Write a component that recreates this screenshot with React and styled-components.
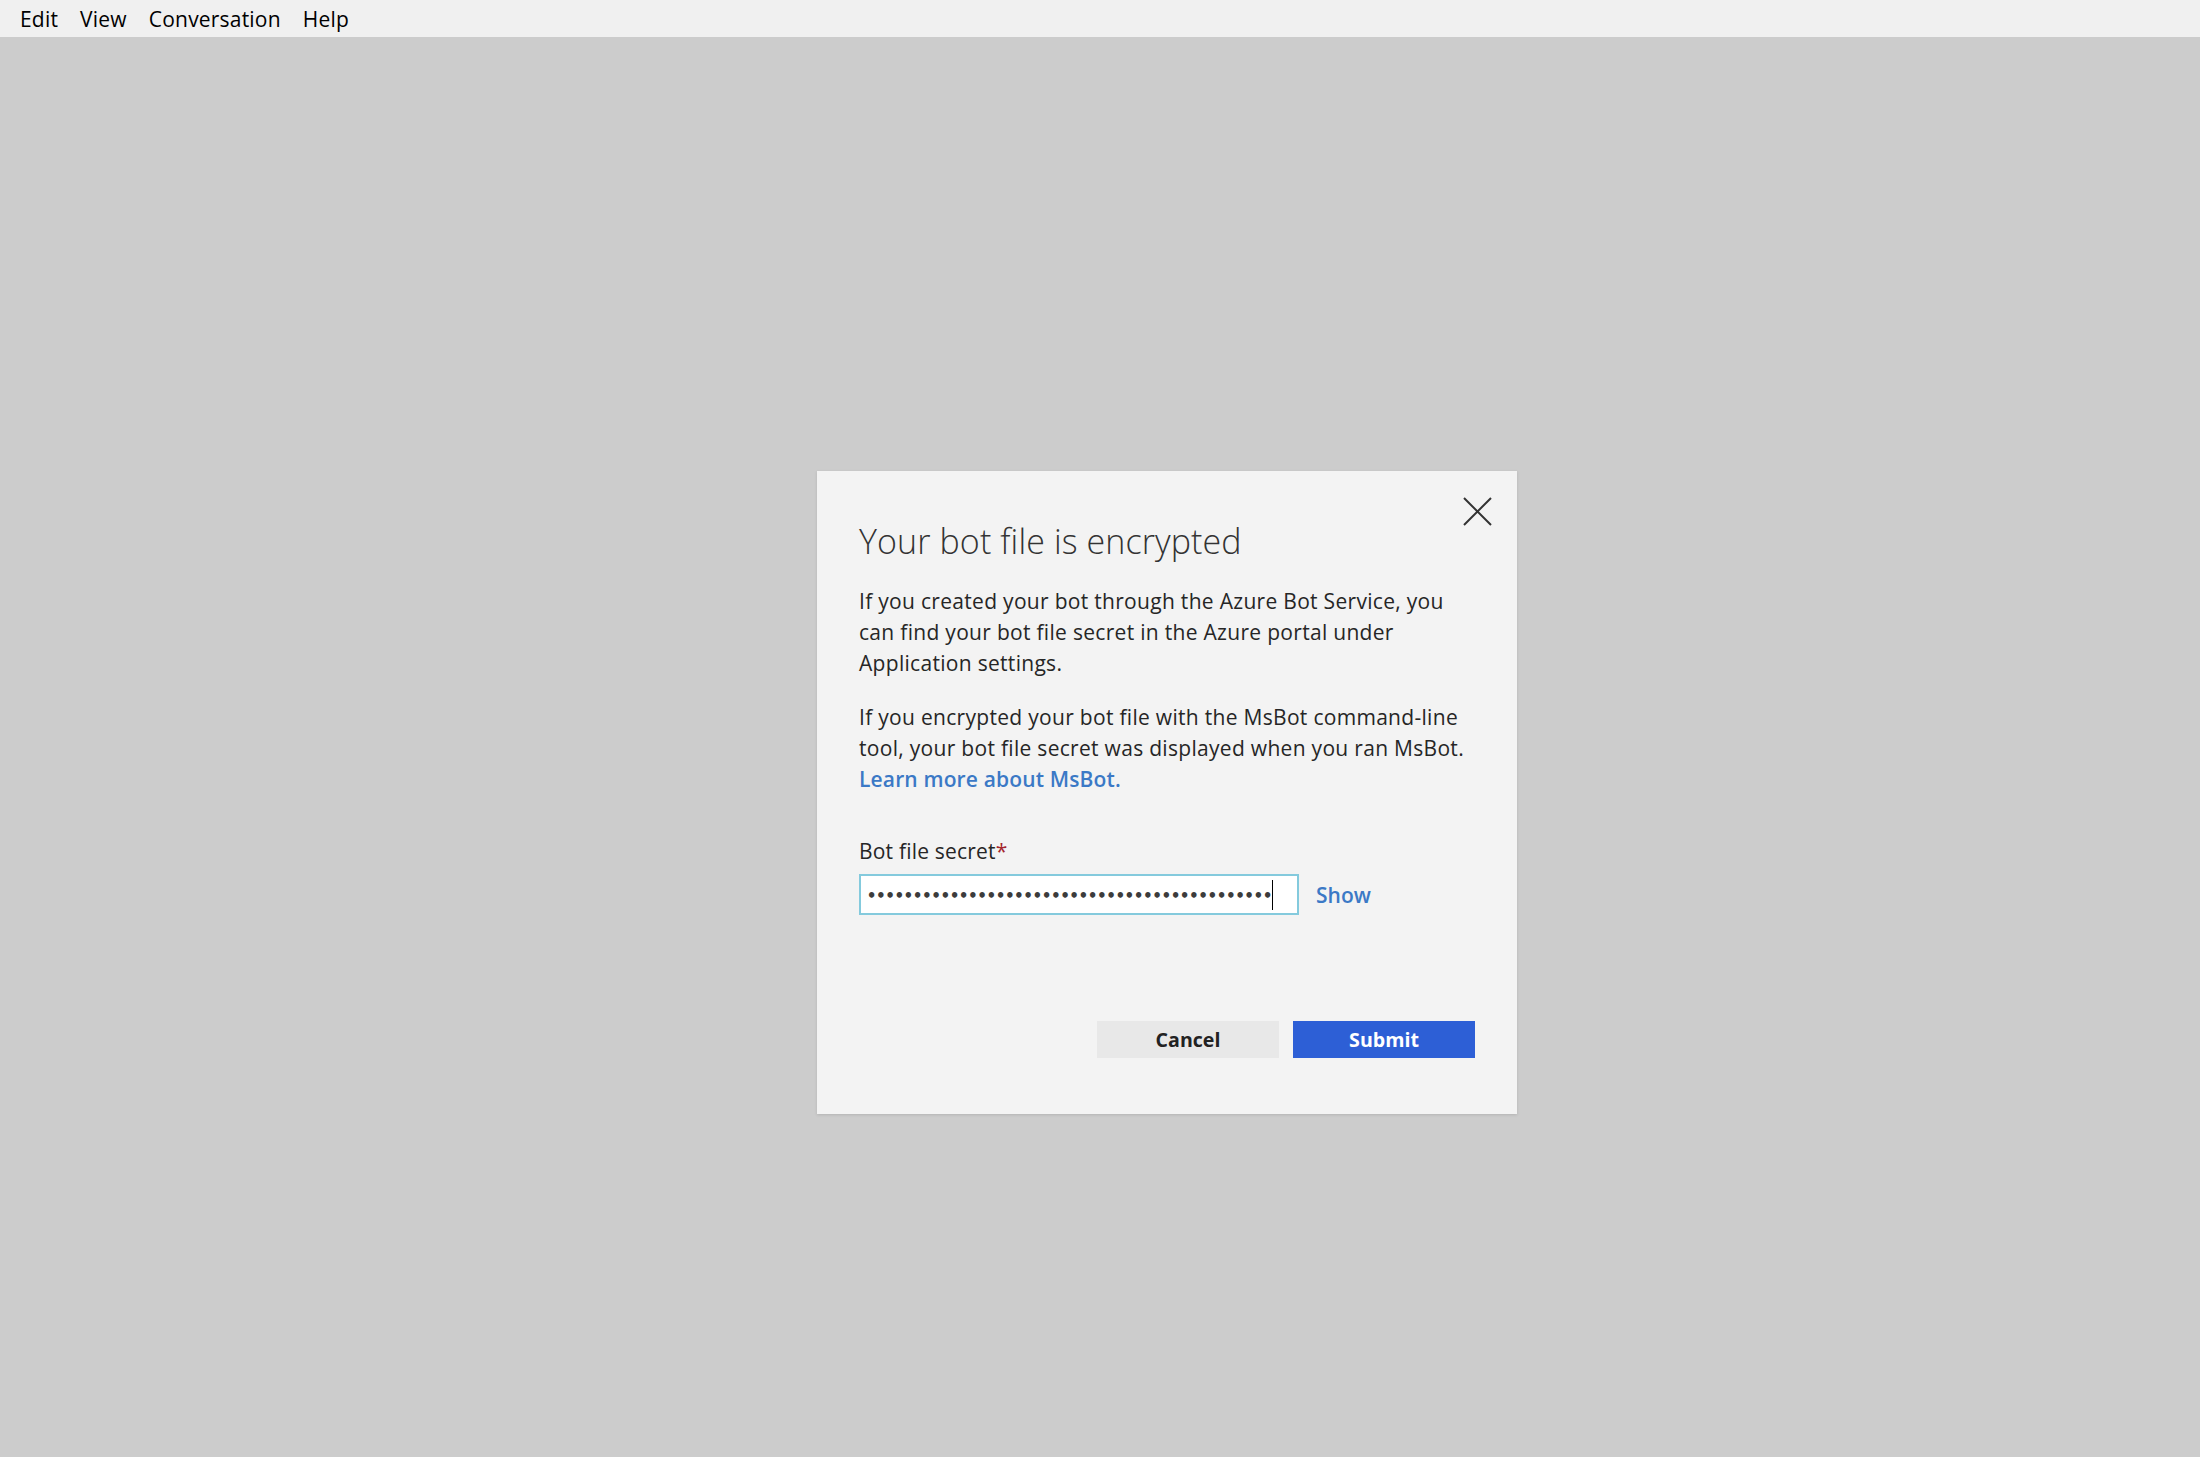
import React from "react";
import styled, { createGlobalStyle } from "styled-components";

const GlobalStyle = createGlobalStyle`
  html, body {
    margin: 0;
    padding: 0;
  }
  body {
    background: #cccccc;
    font-family: "Segoe UI", "Open Sans", "Noto Sans", sans-serif;
  }
  #root {
    min-height: 100vh;
    display: flex;
    flex-direction: column;
  }
`;

const menuItems = ["Edit", "View", "Conversation", "Help"];

function App() {
  const secret = "•".repeat(44);

  return (
    <>
      <GlobalStyle />
      <MenuBar>
        {menuItems.map((item) => (
          <MenuItem key={item}>{item}</MenuItem>
        ))}
      </MenuBar>
      <Backdrop>
        <Dialog>
          <CloseButton aria-label="Close">
            <svg width="29" height="29" viewBox="0 0 29 29">
              <path d="M1 1 L28 28 M28 1 L1 28" stroke="#333" strokeWidth="2" fill="none" />
            </svg>
          </CloseButton>
          <Title>Your bot file is encrypted</Title>
          <Paragraph>
            If you created your bot through the Azure Bot Service, you
            <br />
            can find your bot file secret in the Azure portal under
            <br />
            Application settings.
          </Paragraph>
          <Paragraph spaced>
            If you encrypted your bot file with the MsBot command-line
            <br />
            tool, your bot file secret was displayed when you ran MsBot.
            <br />
            <Link href="#">Learn more about MsBot.</Link>
          </Paragraph>
          <Label>
            Bot file secret<Required>*</Required>
          </Label>
          <FieldRow>
            <SecretBox>
              <Dots>{secret}</Dots>
              <Caret />
            </SecretBox>
            <ShowLink href="#">Show</ShowLink>
          </FieldRow>
          <ButtonRow>
            <Button>Cancel</Button>
            <Button primary>Submit</Button>
          </ButtonRow>
        </Dialog>
      </Backdrop>
    </>
  );
}

export default App;

const MenuBar = styled.nav`
  display: flex;
  align-items: center;
  height: 37px;
  padding-left: 9px;
  background: #f0f0f0;
`;

const MenuItem = styled.span`
  padding: 0 11px;
  font-size: 21px;
  letter-spacing: 0.2px;
  color: #000;
`;

const Backdrop = styled.main`
  flex: 1;
  display: flex;
  align-items: flex-start;
  padding: 434px 0 0 817px;
`;

const Dialog = styled.section`
  position: relative;
  box-sizing: border-box;
  width: 700px;
  height: 643px;
  padding: 50px 42px 56px;
  display: flex;
  flex-direction: column;
  background: #f3f3f3;
  box-shadow: 0 1px 3px rgba(0, 0, 0, 0.12);
  color: #262626;
`;

const CloseButton = styled.button`
  position: absolute;
  top: 26px;
  right: 25px;
  width: 29px;
  height: 29px;
  padding: 0;
  border: none;
  background: none;
  cursor: pointer;

  svg {
    display: block;
  }
`;

const Title = styled.h1`
  margin: 0 0 25px;
  font-size: 34px;
  font-weight: 300;
  letter-spacing: 0.1px;
  line-height: 40px;
  color: #333;
`;

const Paragraph = styled.p`
  margin: ${(p) => (p.spaced ? "23px" : "0")} 0 0;
  font-size: 21px;
  letter-spacing: 0.3px;
  line-height: 31px;
`;

const Link = styled.a`
  color: #3b79c6;
  font-weight: 600;
  letter-spacing: 0.15px;
  text-decoration: none;
`;

const Label = styled.div`
  margin-top: 41px;
  font-size: 21px;
  letter-spacing: 0.2px;
  line-height: 31px;
`;

const Required = styled.span`
  color: #a4262c;
`;

const FieldRow = styled.div`
  display: flex;
  align-items: center;
  margin-top: 7px;
`;

const SecretBox = styled.div`
  box-sizing: border-box;
  width: 440px;
  height: 41px;
  padding: 3px 0 0 6px;
  display: flex;
  align-items: center;
  background: #fff;
  border: 2px solid #84cadd;
`;

const Dots = styled.span`
  font-family: "DejaVu Sans Mono", "Liberation Mono", monospace;
  font-size: 15.3px;
  font-weight: 700;
  color: #3c3c3c;
  white-space: nowrap;
`;

const Caret = styled.span`
  width: 1px;
  height: 30px;
  margin-top: -3px;
  background: #000;
`;

const ShowLink = styled.a`
  margin-left: 17px;
  font-size: 21px;
  font-weight: 600;
  color: #3b79c6;
  text-decoration: none;
`;

const ButtonRow = styled.div`
  margin-top: auto;
  display: flex;
  justify-content: flex-end;
  gap: 14px;
`;

const Button = styled.button`
  width: 182px;
  height: 37px;
  border: none;
  font-family: inherit;
  font-size: 19.6px;
  font-weight: 700;
  color: ${(p) => (p.primary ? "#fff" : "#222")};
  background: ${(p) => (p.primary ? "#2d5fd6" : "#e8e8e8")};
  cursor: pointer;
`;
